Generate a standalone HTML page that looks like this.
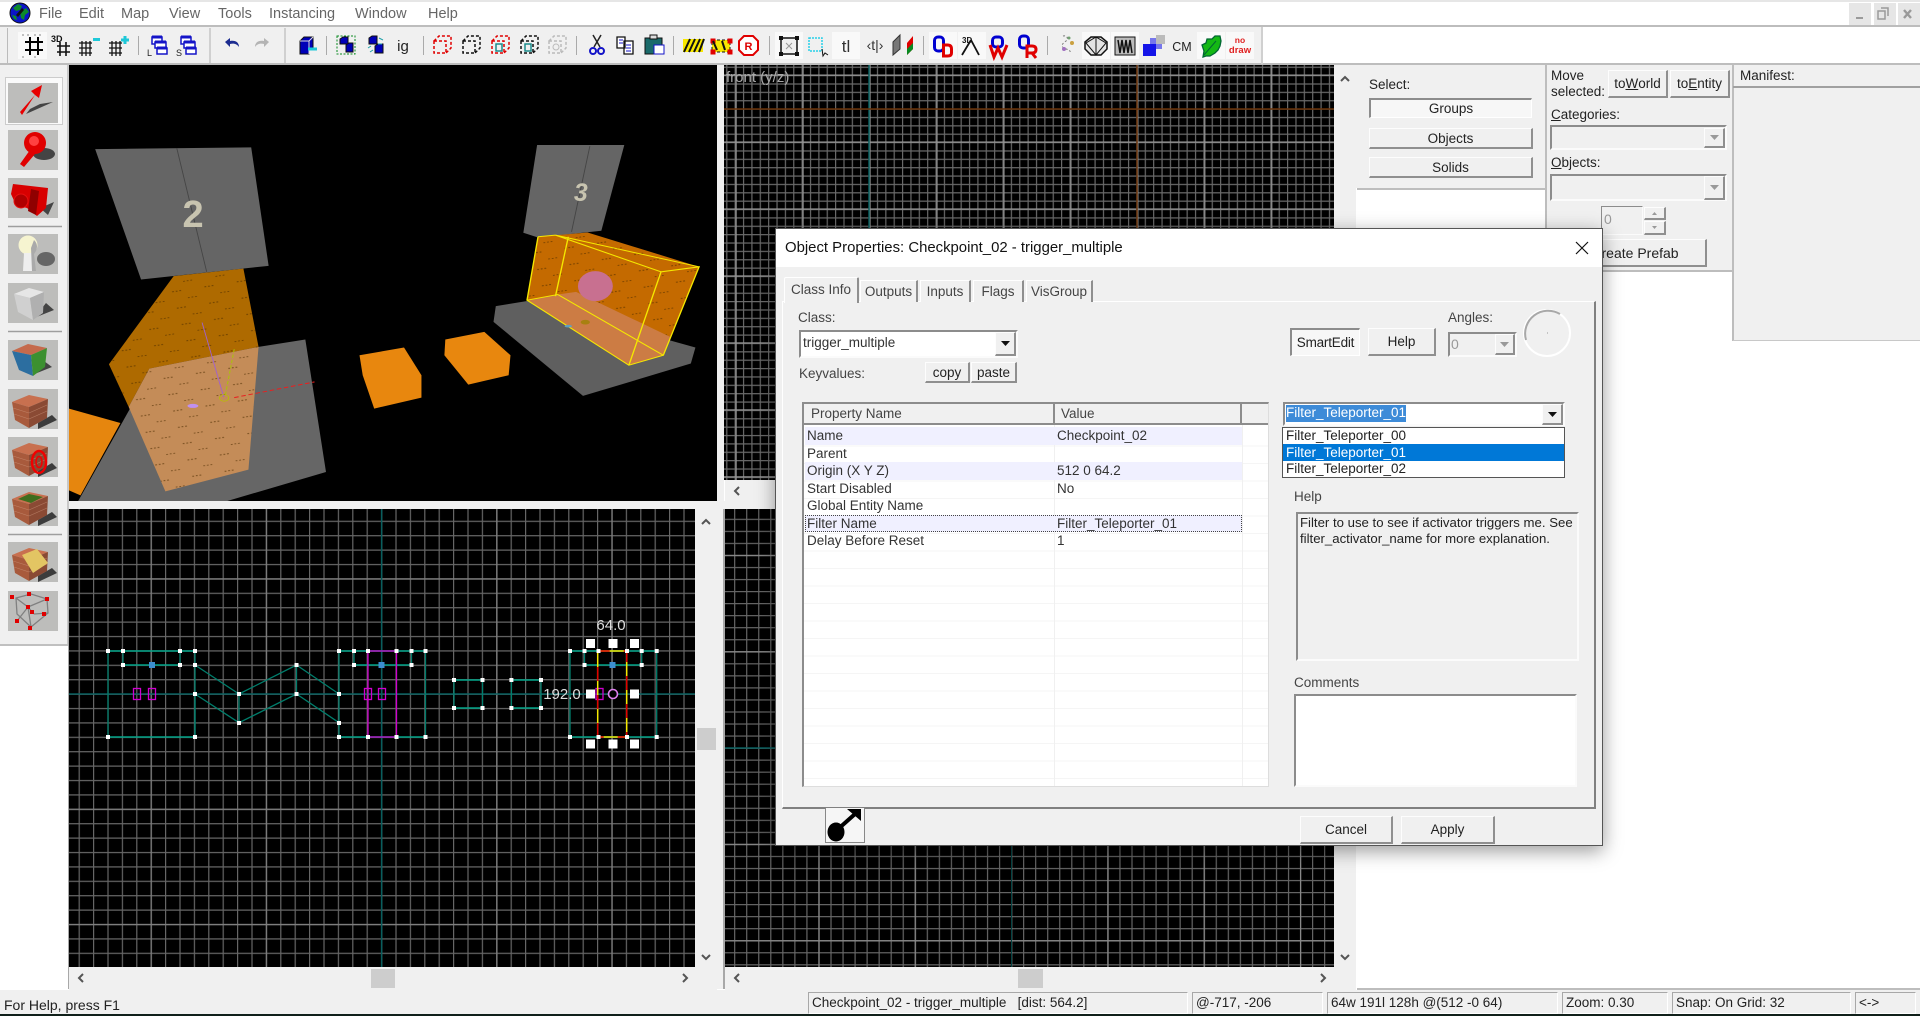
<!DOCTYPE html>
<html><head><meta charset="utf-8"><title>Hammer</title>
<style>
html,body{margin:0;padding:0}
body{width:1920px;height:1016px;overflow:hidden;position:relative;background:#fff;font:13px "Liberation Sans",sans-serif;color:#222;filter:blur(.35px)}
.a,.t,.b,.s{position:absolute;box-sizing:border-box}
.t{white-space:nowrap;line-height:16px;height:16px}
.b{background:#f0f0f0;border:1px solid #fdfdfd;border-right:2px solid #8f8f8f;border-bottom:2px solid #8f8f8f;display:flex;align-items:center;justify-content:center;white-space:nowrap}
.s{border:2px solid #8c8c8c;border-right-color:#fbfbfb;border-bottom-color:#fbfbfb}
.p{background:#f7f7f7;border:2px solid #8c8c8c;border-right-color:#fff;border-bottom-color:#fff;display:flex;align-items:center;justify-content:center}
.g{background:#f0f0f0}
svg{position:absolute;display:block}
.st{position:absolute;top:992px;height:22px;box-sizing:border-box;border:1px solid #a8a8a8;border-right-color:#fff;border-bottom-color:#fff;padding-left:3px;line-height:20px;white-space:nowrap;font-size:13.5px}
.tab{position:absolute;top:280px;height:22px;background:#f0f0f0;border-top:1px solid #fff;border-left:1px solid #fff;border-right:2px solid #8f8f8f;line-height:21px;text-align:center;box-sizing:border-box;font-size:13.5px;color:#444}
.r{position:absolute;left:805px;width:437px;height:17.5px;line-height:17.5px;font-size:13.5px;white-space:nowrap;color:#333}
.r span{position:absolute;top:0}
.r span:first-child{left:2px}
.r span+span{left:252px}
</style></head>
<body>
<!-- title + menu -->
<div class="a" style="left:0;top:0;width:1920px;height:2px;background:#e6e6e6"></div>
<div class="a" style="left:0;top:25px;width:1920px;height:2px;background:#bdbdbd"></div>
<svg style="left:8px;top:2px" width="24" height="22" viewBox="0 0 24 22"><circle cx="12" cy="11" r="10" fill="#0a14c8" stroke="#111"/><path d="M5 6l5-4 4 2-2 4-4 1zM12 10l6-4 3 4-4 3-1 5-3-2zM4 13l4 1 1 4-3-1z" fill="#0c8a2a"/><path d="M8 13l6-7 2 2-6 7z" fill="#111"/></svg>
<div class="t" style="left:39px;top:6px;font-size:14.5px;color:#666">File</div>
<div class="t" style="left:79px;top:6px;font-size:14.5px;color:#666">Edit</div>
<div class="t" style="left:121px;top:6px;font-size:14.5px;color:#666">Map</div>
<div class="t" style="left:169px;top:6px;font-size:14.5px;color:#666">View</div>
<div class="t" style="left:218px;top:6px;font-size:14.5px;color:#666">Tools</div>
<div class="t" style="left:269px;top:6px;font-size:14.5px;color:#666">Instancing</div>
<div class="t" style="left:355px;top:6px;font-size:14.5px;color:#666">Window</div>
<div class="t" style="left:428px;top:6px;font-size:14.5px;color:#666">Help</div>
<div class="a" style="left:1849px;top:3px;width:22px;height:22px;background:#e6e6e6"></div>
<div class="a" style="left:1874px;top:3px;width:22px;height:22px;background:#e6e6e6"></div>
<div class="a" style="left:1898px;top:3px;width:22px;height:22px;background:#e6e6e6"></div>
<svg style="left:1849px;top:3px" width="71" height="22" viewBox="0 0 71 22"><path d="M7 15h7" stroke="#9a9a9a" stroke-width="2"/><path d="M29 8h7v8h-7zM32 5h7v8" fill="none" stroke="#9a9a9a" stroke-width="1.5"/><path d="M55 7l7 8M62 7l-7 8" stroke="#9a9a9a" stroke-width="2.4"/></svg>

<!-- toolbar -->
<div class="a g" style="left:0;top:27px;width:1262px;height:37px"></div>
<div class="a" style="left:0;top:63px;width:1920px;height:2px;background:#bdbdbd"></div>
<div class="a" style="left:1261px;top:27px;width:2px;height:37px;background:#d0d0d0"></div>
<div class="a" style="left:7px;top:28px;width:1px;height:35px;background:#bbb"></div>
<div class="a" style="left:209px;top:28px;width:2px;height:35px;background:#d0d0d0"></div>
<div class="a" style="left:284px;top:28px;width:2px;height:35px;background:#d0d0d0"></div>
<div class="a" style="left:18px;top:32px;width:29px;height:27px;background:#f9f9f9"></div>
<div class="a" style="left:775px;top:32px;width:28px;height:27px;background:#f9f9f9"></div>
<div class="a" style="left:832px;top:32px;width:28px;height:27px;background:#f9f9f9"></div>
<div class="a" style="left:929px;top:32px;width:28px;height:27px;background:#f9f9f9"></div>
<div class="a" style="left:958px;top:32px;width:28px;height:27px;background:#f9f9f9"></div>
<div class="a" style="left:1082px;top:32px;width:28px;height:27px;background:#f9f9f9"></div>
<div class="a" style="left:1111px;top:32px;width:28px;height:27px;background:#f9f9f9"></div>
<div class="a" style="left:1197px;top:32px;width:28px;height:27px;background:#f9f9f9"></div>
<div class="a" style="left:1226px;top:32px;width:28px;height:27px;background:#f9f9f9"></div>
<svg style="left:0;top:27px" width="1262" height="37" viewBox="0 27 1262 37" font-family="Liberation Sans,sans-serif">
<path d="M138.5 36v19M326.5 36v19M423.5 36v19M576.5 36v19M673.5 36v19M769.5 36v19M923.5 36v19M1047.5 36v19" stroke="#aaa"/>
<!-- grids -->
<g transform="translate(34,46)"><path d="M-9-4H9M-9 4H9M-4-9V9M4-9V9" stroke="#000" stroke-width="2"/><path d="M-12-11h2M-7-11h2M0-11h2M5-11h2M-12 11h2M0 11h2" stroke="#888"/></g>
<text x="51" y="42" font-size="9" font-weight="bold" fill="#111">3D</text>
<g transform="translate(63,49)"><path d="M-6-3H7M-6 3H7M-3-7V7M3-7V7" stroke="#111" stroke-width="1.6"/></g>
<g transform="translate(85,48)"><path d="M-6-5H7M-6 0H7M-6 5H7M-3-7V8M1-7V8M5-7V8" stroke="#111" stroke-width="1.3"/></g><path d="M93 39.5h7" stroke="#1ec8d8" stroke-width="3"/>
<g transform="translate(115,48)"><path d="M-6-5H7M-6 0H7M-6 5H7M-3-7V8M1-7V8M5-7V8" stroke="#111" stroke-width="1.3"/></g><path d="M121 40h8M125 36v8" stroke="#1ec8d8" stroke-width="3"/>
<!-- stacks -->
<g fill="#fff" stroke="#1414c8" stroke-width="1.5"><rect x="152" y="37" width="10" height="7"/><rect x="155" y="42" width="11" height="6"/><rect x="157" y="48" width="10" height="6"/><rect x="181" y="37" width="10" height="7"/><rect x="184" y="42" width="11" height="6"/><rect x="186" y="48" width="10" height="6"/></g>
<path d="M152 37h10M155 42h11M157 48h10M181 37h10M184 42h11M186 48h10" stroke="#1414c8" stroke-width="3"/>
<text x="147" y="56" font-size="9" fill="#222">L</text><text x="176" y="56" font-size="9" fill="#222">S</text>
<!-- undo redo -->
<path d="M225 42l5-4v3c5-1 9 1 9 6-2-3-5-4-9-3v3z" fill="#1c2c90"/><path d="M269 42l-5-4v3c-5-1-9 1-9 6 2-3 5-4 9-3v3z" fill="#b4b4b4"/>
<!-- cubes -->
<g transform="translate(307,45)"><path d="M-7-4l4-4H6V5H2V9H-7Z" fill="#0000b8" stroke="#111"/><path d="M-7-4H2V9M2-4l4-4" stroke="#ddd" fill="none"/><path d="M1 4H10" stroke="#1ec8d8" stroke-width="3"/></g>
<rect x="337" y="36" width="18" height="18" fill="none" stroke="#0a8a20" stroke-dasharray="2 1.5"/>
<g fill="#0000b8" stroke="#111"><path d="M340 39l3-2h5v7h-8z"/><path d="M346 45l3-2h4v9h-7z"/><path d="M369 38l3-2h5v8h-8z"/><path d="M375 46l3-2h5v9h-8z"/></g>
<path d="M379 38l4 2M382 44h-4M368 48l3-2M370 52l3-2" stroke="#1ea0a8"/>
<text x="403" y="51" font-size="15" text-anchor="middle" fill="#222">ig</text>
<g fill="none" stroke-dasharray="3 2" stroke-width="1.5"><path stroke="#e00000" d="M434 41h12v12h-12zM434 41l5-5h12v12l-5 5"/><path stroke="#111" d="M463 41h12v12h-12zM463 41l5-5h12v12l-5 5"/><path stroke="#e00000" d="M492 41h12v12h-12zM492 41l5-5h12v12l-5 5"/><path stroke="#111" d="M521 41h12v12h-12zM521 41l5-5h12v12l-5 5"/><path stroke="#bbb" d="M549 41h12v12h-12zM549 41l5-5h12v12l-5 5"/></g>
<rect x="496" y="44" width="6" height="7" fill="none" stroke="#1a8c8c" stroke-width="1.5"/><rect x="525" y="44" width="6" height="7" fill="none" stroke="#1a8c8c" stroke-width="1.5"/><circle cx="556" cy="47" r="3" fill="none" stroke="#bbb"/>
<!-- scissors copy paste -->
<path d="M593 35l7 12M601 35l-7 12" stroke="#222" stroke-width="1.5"/><circle cx="593" cy="51" r="3" fill="none" stroke="#1414c8" stroke-width="2"/><circle cx="601" cy="51" r="3" fill="none" stroke="#1414c8" stroke-width="2"/>
<path d="M617 37h8v11h-8zM624 41h9v13h-9z" fill="#fff" stroke="#111" stroke-width="1.3"/><path d="M619 40h4M619 43h4M626 45h5M626 48h5M626 51h5" stroke="#1414c8"/>
<path d="M645 38h17v16h-17z" fill="#1a6a6a" stroke="#111"/><rect x="650" y="35" width="7" height="4" fill="#ddd" stroke="#111"/><rect x="654" y="45" width="10" height="9" fill="#fff" stroke="#1414c8"/>
<!-- hazard -->
<rect x="683" y="39" width="20" height="13" fill="#f8e800"/><path d="M684 52l6-13M689 52l6-13M694 52l6-13M699 52l5-13" stroke="#111" stroke-width="2"/>
<rect x="712" y="40" width="18" height="12" fill="#f8e800" stroke="#111" stroke-dasharray="3 2"/><path d="M711 39h4v4h-4zM728 39h4v4h-4zM711 50h4v4h-4zM728 50h4v4h-4z" fill="#e00000" stroke="#e00000"/><path d="M713 41l4 9M722 41l3 9" stroke="#111" stroke-width="2"/>
<path d="M744 36h9l5 5v9l-5 5h-9l-5-5v-9z" fill="#fff" stroke="#e00000" stroke-width="2"/><text x="748.5" y="50" font-size="11" text-anchor="middle" font-weight="bold" fill="#d00">R</text>
<!-- handles -->
<rect x="781" y="38" width="16" height="16" fill="#f0f0f0" stroke="#111" stroke-width="1.5"/><path d="M779 36h4v4h-4zM795 36h4v4h-4zM779 52h4v4h-4zM795 52h4v4h-4z" fill="#111"/><path d="M786 43l6 6M792 43l-6 6" stroke="#999"/>
<rect x="809" y="38" width="13" height="13" fill="none" stroke="#28d0e8" stroke-width="1.5" stroke-dasharray="2 1"/><path d="M822 49l1 7 2-3 3 2" fill="none" stroke="#111"/>
<text x="846" y="52" font-size="17" text-anchor="middle" fill="#333">tl</text>
<text x="875" y="50" font-size="14" text-anchor="middle" fill="#333">‹t|›</text>
<path d="M893 42l7-7v14l-7 6z" fill="#777" stroke="#333"/><path d="M907 43l6-7v13l-6 6z" fill="#e00000"/><path d="M907 49l6-6v6l-6 6z" fill="#088a20"/>
<!-- OD OW OR -->
<g fill="none" stroke-width="3">
<rect x="934.5" y="37" width="9" height="14" rx="3.5" stroke="#0000d0"/><path d="M943.5 45h4q4 0 4 4v4q0 3-4 3h-4z" stroke="#e00000"/>
<rect x="992.5" y="37" width="10" height="10" rx="3.5" stroke="#0000d0"/><path d="M990 45l4 12 4-9 4 9 5-12" stroke="#e00000"/>
<rect x="1019.5" y="36" width="9" height="12" rx="3.5" stroke="#0000d0"/><path d="M1027 58V46h5q4 0 4 3.5t-4 3.500h-5M1032 53l4 5" stroke="#e00000"/>
</g>
<text x="962" y="43" font-size="8" font-weight="bold" fill="#111">3D</text><path d="M971 40l-9 15M971 40l8 15" stroke="#111" stroke-width="1.8" fill="none"/>
<!-- right icons -->
<path d="M1063 36c4-1 6 3 3 5s-6 5-2 7 7 2 6 5" fill="none" stroke="#777" stroke-dasharray="2 2"/><circle cx="1072" cy="43" r="2" fill="#caa040"/><circle cx="1064" cy="49" r="2" fill="#a070c0"/><circle cx="1069" cy="38" r="1.5" fill="#70a070"/>
<path d="M1091 37h10l6 5v7l-6 6h-10l-6-6v-7z" fill="#e4e4e4" stroke="#111" stroke-width="1.5"/><path d="M1086 43l10 12 10-12-10-6zM1096 37v18" fill="none" stroke="#111"/>
<rect x="1115" y="37" width="20" height="18" fill="#bbb" stroke="#111"/><path d="M1118 40l2 13 2-13 2 13 2-13 2 13 2-13 2 13" fill="none" stroke="#111" stroke-width="1.5"/>
<rect x="1143" y="44" width="13" height="12" fill="#1414e8"/><rect x="1150" y="38" width="12" height="11" fill="#1414e8" opacity=".55"/><rect x="1156" y="35" width="9" height="9" fill="#bbb"/>
<text x="1182" y="51" font-size="12.5" text-anchor="middle" fill="#222">CM</text>
<path d="M1203 57l1-6-2-6 4-2 1-4 5 0 3-3 5 0 1 5-1 5-2 4-3 3-5 3-4 0z" fill="#14b814" stroke="#063" stroke-width="1.3"/><path d="M1204 55l12-14" stroke="#063"/>
<text x="1240" y="43" font-size="8.5" text-anchor="middle" font-weight="bold" fill="#e02020">no</text><text x="1240" y="53" font-size="9.5" text-anchor="middle" font-weight="bold" fill="#e02020">draw</text>
</svg>

<!-- left tool palette -->
<div class="a g" style="left:0;top:65px;width:68px;height:579px"></div>
<div class="a" style="left:67px;top:65px;width:2px;height:581px;background:#c8c8c8"></div>
<div class="a" style="left:0;top:644px;width:69px;height:2px;background:#c0c0c0"></div>
<div class="a" style="left:5px;top:77px;width:58px;height:48px;background:#fafafa;border:1px solid #ccc;box-sizing:border-box"></div>
<svg style="left:0;top:70px" width="68" height="570" viewBox="0 70 68 570">
<defs>
<g id="bk"><path d="M30 31l14-8 5 5-19 9z" fill="#3c3c3c"/><path d="M4 10l17-7 19 4-19 8z" fill="#c8704f"/><path d="M4 10l17 5v21L7 28z" fill="#a85a3c"/><path d="M21 15l19-8-1 19-18 10z" fill="#8a4a34"/><path d="M5 16l16 5M6 22l15 5M21 21l18-8M21 27l18-8" stroke="#d09a80" stroke-width=".6" opacity=".6"/></g>
</defs>
<g fill="#bdbdbb"><rect x="8" y="83" width="50" height="40"/><rect x="8" y="130" width="50" height="40"/><rect x="8" y="178" width="50" height="40"/><rect x="8" y="234" width="50" height="40"/><rect x="8" y="283" width="50" height="40"/><rect x="8" y="340" width="50" height="40"/><rect x="8" y="389" width="50" height="40"/><rect x="8" y="437" width="50" height="40"/><rect x="8" y="486" width="50" height="40"/><rect x="8" y="542" width="50" height="40"/><rect x="8" y="591" width="50" height="40"/></g>
<path d="M8 226.5h54M8 331.5h54M8 534.5h54" stroke="#9e9e9e" stroke-width="1.5"/>
<!-- arrow -->
<path d="M26 114l27-12-13 2-10 5z" fill="#444"/><path d="M20 112l15-17-4-4 11-6-3 13-4-3-13 20z" fill="#e80000"/>
<!-- magnifier -->
<ellipse cx="44" cy="154" rx="11" ry="6" fill="#444"/><path d="M20 164l10-14 5 4-11 13z" fill="#e00000"/><circle cx="35" cy="143" r="11" fill="#e00000"/><circle cx="34" cy="141" r="5" fill="#ff4040"/>
<!-- blob -->
<path d="M40 208l14-6-6 13z" fill="#444"/><path d="M13 184l35 4-2 20-9 8-10-8-11-3-5-11z" fill="#d80000"/><path d="M31 189l-3 22 8 4 3-24z" fill="#900000"/><circle cx="21" cy="201" r="7" fill="#b00000" stroke="#e81010"/>
<!-- bulb -->
<ellipse cx="46" cy="259" rx="9" ry="7" fill="#666"/><circle cx="28" cy="245" r="9.500" fill="#f6f4d0"/><path d="M24 253h9l2 18h-12z" fill="#eee"/><path d="M34 240c4 4 4 9 0 14l2 17h-4l-1-23z" fill="#aaa"/>
<!-- gray cube -->
<path d="M34 318l20-8-8-7z" fill="#444"/><path d="M14 294l15-6 15 4-14 6z" fill="#e6e6e6"/><path d="M14 294l16 4 3 22-15-8z" fill="#d0d0d0"/><path d="M30 298l14-6-1 21-10 7z" fill="#b0b0b0"/>
<!-- blue green brick -->
<path d="M32 375l20-8-8-6z" fill="#444"/><path d="M12 351l16-7 19 4-16 7z" fill="#c56a4c"/><path d="M12 351l19 4 2 21-14-6z" fill="#2c6ea0"/><path d="M31 355l16-7-2 19-12 9z" fill="#3c9030"/>
<g transform="translate(8,392)"><use href="#bk"/></g>
<g transform="translate(8,440)"><use href="#bk"/><ellipse cx="31" cy="22" rx="7" ry="11" fill="none" stroke="#f00000" stroke-width="2.4"/><ellipse cx="31" cy="22" rx="3" ry="5.500" fill="none" stroke="#f00000" stroke-width="1.6"/></g>
<g transform="translate(8,489)"><use href="#bk"/><path d="M10 10l11-5 14 3-12 6z" fill="#3f6d1e"/></g>
<g transform="translate(8,545)"><use href="#bk"/><path d="M14 10l15-6 11 14-15 10z" fill="#e3c563"/></g>
<!-- vertex -->
<g stroke="#808080" stroke-width="1.3" fill="none"><path d="M16 598l15-4 16 5 1 14-17 14-14-13zM16 598l12 9 19-8M28 607l3 20M28 607l-11 14M28 607l6 7M34 614l14-1"/></g>
<g fill="#e00000"><rect x="27" y="592" width="4" height="4"/><rect x="45" y="597" width="4" height="4"/><rect x="10" y="595" width="4" height="4"/><rect x="26" y="605" width="4" height="4"/><rect x="30" y="610" width="4" height="4"/><rect x="15" y="619" width="4" height="4"/><rect x="42" y="612" width="4" height="4"/><rect x="28" y="626" width="4" height="4"/></g>
</svg>

<!-- general backgrounds -->
<div class="a g" style="left:69px;top:501px;width:1287px;height:8px"></div>
<div class="a g" style="left:717px;top:65px;width:7px;height:924px"></div>
<div class="a g" style="left:1334px;top:65px;width:22px;height:924px"></div>
<div class="a" style="left:723px;top:509px;width:2px;height:480px;background:#a8a8a8"></div>
<div class="a" style="left:68px;top:509px;width:1px;height:480px;background:#a8a8a8"></div>
<div class="a g" style="left:69px;top:967px;width:648px;height:23px"></div>
<div class="a g" style="left:725px;top:967px;width:631px;height:23px"></div>
<div class="a g" style="left:695px;top:509px;width:22px;height:460px"></div>
<div class="a g" style="left:725px;top:480px;width:609px;height:22px"></div>

<!-- 3D view -->
<svg style="left:69px;top:65px;background:#000" width="648" height="436" viewBox="150 15 1412 1307" preserveAspectRatio="none">
<defs><pattern id="sp" width="72" height="50" patternUnits="userSpaceOnUse" patternTransform="rotate(-12)"><path d="M6 8h24M36 32h24" stroke="#4a2a00" stroke-width="2.5" stroke-dasharray="4 4" opacity=".75"/></pattern></defs>
<path d="M170 1322L285 1040 325 925 563 860 665 838 710 1235 495 1322Z" fill="#666"/>
<path d="M150 1045L262 1088 175 1305 150 1290Z" fill="#e6860e"/>
<path d="M378 648L530 625 563 860 325 925 280 1040 237 912Z" fill="#ae6a00"/>
<path d="M378 648L530 625 563 860 325 925 280 1040 237 912Z" fill="url(#sp)"/>
<path d="M325 925L563 860 541 1228 360 1293 280 1040Z" fill="#c48c58"/>
<path d="M325 925L563 860 541 1228 360 1293 280 1040Z" fill="url(#sp)"/>
<path d="M207 267L547 262 585 617 307 658Z" fill="#656565"/><path d="M385 265L450 635" stroke="#454545" stroke-width="2"/>
<path d="M1170 255L1360 255 1310 512 1172 532 1140 518Z" fill="#656565"/><path d="M1285 258L1245 515" stroke="#454545" stroke-width="2"/>
<path d="M783 885L880 862 918 945 918 1012 815 1045 790 945Z" fill="#e8870e"/>
<path d="M970 838L1055 815 1112 885 1108 945 1020 973 968 885Z" fill="#e8870e"/>
<path d="M1080 738L1150 722 1515 862 1505 910 1270 1007 1075 785Z" fill="#5f5f5f"/>
<path d="M1172 530L1280 517 1523 620 1445 885 1370 915 1148 720Z" fill="#c46a00"/>
<path d="M1172 530L1280 517 1523 620 1445 885 1370 915 1148 720Z" fill="url(#sp)"/>
<path d="M1148 720L1215 703 1255 695 1460 830 1445 885 1370 915Z" fill="#cc7c44"/>
<ellipse cx="1297" cy="678" rx="38" ry="45" fill="#c87090"/>
<path d="M1172 530L1148 720 1370 915 1445 885 1523 620 1440 635 1370 915M1210 525L1523 620M1210 525L1440 635M1238 530L1210 708M1148 720L1215 703 1445 885M1172 530L1210 525" fill="none" stroke="#f5e800" stroke-width="3"/>
<path d="M440 787L487 1010" stroke="#a060d0" stroke-width="2"/><path d="M510 867L490 1010" stroke="#a8c800" stroke-width="2" stroke-dasharray="10 6"/><path d="M510 1012L685 965" stroke="#e82020" stroke-width="3" stroke-dasharray="10 6"/>
<circle cx="488" cy="1013" r="10" fill="none" stroke="#b8c000" stroke-width="2"/><ellipse cx="420" cy="1037" rx="12" ry="6" fill="#c090f0"/>
<ellipse cx="1275" cy="786" rx="10" ry="7" fill="#a88010"/><ellipse cx="1238" cy="798" rx="8" ry="4" fill="#60a0c0"/>
<g transform="scale(2.178,3)" font-family="Liberation Sans,sans-serif" text-anchor="middle" fill="#c8c4b0" font-weight="bold"><text x="193" y="167" font-size="38">2</text><text x="581" y="141" font-size="25" font-style="italic">3</text></g>
</svg>

<!-- front view -->
<svg style="left:724px;top:65px;background:#000" width="610" height="415" viewBox="724 65 610 415">
<defs><pattern id="gf" width="8.37" height="8.37" x="868.5" y="108.5" patternUnits="userSpaceOnUse"><path d="M.6 0V8.37M0 .6H8.37" stroke="#6a6a6a" stroke-width="1.2"/></pattern>
<pattern id="gfm" width="66.96" height="66.96" x="735.5" y="74.5" patternUnits="userSpaceOnUse"><path d="M.6 0V66.96M0 .6H66.96" stroke="#969696" stroke-width="1.2"/></pattern></defs>
<rect x="724" y="65" width="610" height="415" fill="url(#gf)"/><rect x="724" y="65" width="610" height="415" fill="url(#gfm)"/>
<path d="M869 65V480" stroke="#065e5e" stroke-width="1.5"/><path d="M724 109H1334M1137 65V480" stroke="#6a3208" stroke-width="1.5"/>
<text x="726" y="82" font-size="15" fill="#a8a8a8" font-family="Liberation Sans,sans-serif">front (y/z)</text>
</svg>

<!-- top view -->
<svg style="left:69px;top:509px;background:#000" width="626" height="458" viewBox="69 509 626 458" font-family="Liberation Sans,sans-serif">
<defs><pattern id="gt" width="14.4" height="14.4" x="381" y="693.5" patternUnits="userSpaceOnUse"><path d="M.6 0V14.4M0 .6H14.4" stroke="#666" stroke-width="1.2"/></pattern>
<pattern id="gtm" width="115.2" height="115.2" x="381" y="693.5" patternUnits="userSpaceOnUse"><path d="M.6 0V115.2M0 .6H115.2" stroke="#808080" stroke-width="1.2"/></pattern></defs>
<rect x="69" y="509" width="626" height="458" fill="url(#gt)"/><rect x="69" y="509" width="626" height="458" fill="url(#gtm)"/>
<path d="M381.6 509V967M69 694H695" stroke="#075e5e" stroke-width="1.5"/>
<g fill="none" stroke="#007e6c" stroke-width="1.3">
<path d="M108 651V737M195 651V737M123 651V665M180 651V665"/>
<path d="M195 665L239 694 296.5 665 339 694M195 694L239 722.7 296.5 694 339 722.7M239 694V722.7M296.5 665V694M195 694V737"/>
<path d="M339 651V737M425.5 651V737M354 651V665M411.5 651V665"/>
<path d="M454 680V708M482.5 680V708M511.4 680V708M541 680V708"/>
<path d="M570 651V737M656.7 651V737M584.5 651V665M641.7 651V665"/>
</g>
<g stroke="#00a488" stroke-width="1.5"><path d="M108 651H195M123 665H180M108 737H195M339 651H425.5M354 665H411.5M339 737H425.5M454 680H482.5M454 708H482.5M511.4 680H541M511.4 708H541M570 651H656.7M584.5 665H641.7M570 737H656.7"/></g>
<g fill="none" stroke="#d000d0" stroke-width="1.3"><rect x="133.5" y="688.5" width="7" height="11"/><rect x="148.5" y="688.5" width="7" height="11"/><rect x="364.5" y="688.5" width="7" height="11"/><rect x="378.5" y="688.5" width="7" height="11"/><path d="M368 651H396.5V737H368Z"/><rect x="596" y="688.5" width="7" height="11"/></g>
<g fill="#3d8fd0"><rect x="149" y="662" width="6" height="6"/><rect x="378.5" y="662" width="6" height="6"/><rect x="609.5" y="662" width="6" height="6"/></g>
<path d="M597.7 651H626.7V737H597.7Z" fill="none" stroke="#f5e800" stroke-width="1.5"/>
<path d="M597.7 737V651H626.7V737H597.7" fill="none" stroke="#e00000" stroke-width="1.5" stroke-dasharray="14 14"/>
<g fill="#fff">
<rect x="106" y="649" width="4" height="4"/><rect x="121" y="649" width="4" height="4"/><rect x="178" y="649" width="4" height="4"/><rect x="193" y="649" width="4" height="4"/><rect x="121" y="663" width="4" height="4"/><rect x="178" y="663" width="4" height="4"/><rect x="193" y="663" width="4" height="4"/><rect x="193" y="692" width="4" height="4"/><rect x="106" y="735" width="4" height="4"/><rect x="193" y="735" width="4" height="4"/>
<rect x="237" y="692" width="4" height="4"/><rect x="294.5" y="663" width="4" height="4"/><rect x="294.5" y="692" width="4" height="4"/><rect x="237" y="721" width="4" height="4"/><rect x="337" y="692" width="4" height="4"/><rect x="337" y="721" width="4" height="4"/>
<rect x="337" y="649" width="4" height="4"/><rect x="352" y="649" width="4" height="4"/><rect x="366" y="649" width="4" height="4"/><rect x="394.5" y="649" width="4" height="4"/><rect x="409.5" y="649" width="4" height="4"/><rect x="423.5" y="649" width="4" height="4"/><rect x="352" y="663" width="4" height="4"/><rect x="409.5" y="663" width="4" height="4"/><rect x="337" y="735" width="4" height="4"/><rect x="366" y="735" width="4" height="4"/><rect x="394.5" y="735" width="4" height="4"/><rect x="423.5" y="735" width="4" height="4"/>
<rect x="452" y="678" width="4" height="4"/><rect x="480.5" y="678" width="4" height="4"/><rect x="452" y="706" width="4" height="4"/><rect x="480.5" y="706" width="4" height="4"/><rect x="509.4" y="678" width="4" height="4"/><rect x="539" y="678" width="4" height="4"/><rect x="509.4" y="706" width="4" height="4"/><rect x="539" y="706" width="4" height="4"/>
<rect x="568" y="649" width="4" height="4"/><rect x="582.5" y="649" width="4" height="4"/><rect x="596.5" y="649" width="4" height="4"/><rect x="625" y="649" width="4" height="4"/><rect x="639.7" y="649" width="4" height="4"/><rect x="654.7" y="649" width="4" height="4"/><rect x="582.5" y="663" width="4" height="4"/><rect x="639.7" y="663" width="4" height="4"/><rect x="568" y="735" width="4" height="4"/><rect x="596.5" y="735" width="4" height="4"/><rect x="625" y="735" width="4" height="4"/><rect x="654.7" y="735" width="4" height="4"/>
<rect x="586" y="639" width="9" height="9"/><rect x="608.5" y="639" width="9" height="9"/><rect x="630" y="639" width="9" height="9"/><rect x="586" y="689.5" width="9" height="9"/><rect x="630" y="689.5" width="9" height="9"/><rect x="586" y="739.5" width="9" height="9"/><rect x="608.5" y="739.5" width="9" height="9"/><rect x="630" y="739.5" width="9" height="9"/>
</g>
<circle cx="613" cy="694" r="4.5" fill="#000" stroke="#e080f0" stroke-width="1.6"/>
<text x="611" y="630" font-size="15" text-anchor="middle" fill="#ddd">64.0</text>
<text x="562" y="699" font-size="15" text-anchor="middle" fill="#ddd">192.0</text>
</svg>

<!-- side view -->
<svg style="left:725px;top:509px;background:#000" width="609" height="458" viewBox="725 509 609 458">
<defs><pattern id="gs" width="12.04" height="12.04" x="1011" y="747.5" patternUnits="userSpaceOnUse"><path d="M.6 0V12.04M0 .6H12.04" stroke="#666" stroke-width="1.2"/></pattern>
<pattern id="gsm" width="96.32" height="96.32" x="1011" y="747.5" patternUnits="userSpaceOnUse"><path d="M.6 0V96.32M0 .6H96.32" stroke="#8a8a8a" stroke-width="1.2"/></pattern></defs>
<rect x="725" y="509" width="609" height="458" fill="url(#gs)"/><rect x="725" y="509" width="609" height="458" fill="url(#gsm)"/>
<path d="M1011.5 509V967" stroke="#044444"/><path d="M725 748H1334" stroke="#075e5e" stroke-width="1.5"/>
</svg>

<!-- scrollbar bits -->
<div class="a" style="left:697px;top:728px;width:19px;height:22px;background:#cdcdcd"></div>
<div class="a" style="left:371px;top:969px;width:24px;height:19px;background:#cdcdcd"></div>
<div class="a" style="left:1018px;top:969px;width:25px;height:19px;background:#cdcdcd"></div>
<svg style="left:0;top:0" width="1920" height="1016" viewBox="0 0 1920 1016"><g fill="none" stroke="#555" stroke-width="2"><path d="M702 524l4-4 4 4M702 955l4 4 4-4M83 974l-4 4 4 4M683 974l4 4-4 4M739 974l-4 4 4 4M1321 974l4 4-4 4M1341 81l4-4 4 4M1341 955l4 4 4-4M739 487l-4 4 4 4"/></g></svg>

<!-- select panel -->
<div class="a g" style="left:1357px;top:65px;width:188px;height:123px"></div>
<div class="a g" style="left:1356px;top:65px;width:1px;height:123px"></div>
<div class="a" style="left:1357px;top:188px;width:188px;height:2px;background:#bdbdbd"></div>
<div class="t" style="left:1369px;top:77px;font-size:13.5px">Select:</div>
<div class="a p" style="left:1369px;top:98px;width:163px;height:20px;font-size:13.5px;border-width:2px 1px 1px 2px">Groups</div>
<div class="b" style="left:1369px;top:128px;width:164px;height:21px;font-size:13.5px">Objects</div>
<div class="b" style="left:1369px;top:157px;width:164px;height:21px;font-size:13.5px">Solids</div>

<!-- move panel -->
<div class="a g" style="left:1545px;top:65px;width:188px;height:205px"></div>
<div class="a" style="left:1545px;top:65px;width:2px;height:205px;background:#bdbdbd"></div>
<div class="a" style="left:1545px;top:270px;width:188px;height:2px;background:#bdbdbd"></div>
<div class="t" style="left:1551px;top:68px;font-size:13.5px">Move</div>
<div class="t" style="left:1551px;top:84px;font-size:13.5px">selected:</div>
<div class="b" style="left:1608px;top:70px;width:60px;height:28px;font-size:13.5px">to<u>W</u>orld</div>
<div class="b" style="left:1670px;top:70px;width:60px;height:28px;font-size:13.5px">to<u>E</u>ntity</div>
<div class="t" style="left:1551px;top:107px;font-size:13.5px"><u>C</u>ategories:</div>
<div class="a s" style="left:1550px;top:125px;width:177px;height:25px"></div>
<div class="b" style="left:1704px;top:128px;width:21px;height:20px"><svg style="position:static" width="9" height="5"><path d="M0 0h9L4.5 5z" fill="#999"/></svg></div>
<div class="t" style="left:1551px;top:155px;font-size:13.5px"><u>O</u>bjects:</div>
<div class="a s" style="left:1550px;top:174px;width:177px;height:27px"></div>
<div class="b" style="left:1704px;top:176px;width:21px;height:24px"><svg style="position:static" width="9" height="5"><path d="M0 0h9L4.5 5z" fill="#999"/></svg></div>
<div class="a s" style="left:1601px;top:206px;width:42px;height:29px;border-width:1px"></div>
<div class="t" style="left:1604px;top:211px;font-size:14px;color:#999">0</div>
<div class="b" style="left:1644px;top:207px;width:22px;height:13px"><svg style="position:static" width="5" height="3"><path d="M0 3h5L2.500 0z" fill="#999"/></svg></div>
<div class="b" style="left:1644px;top:221px;width:22px;height:14px"><svg style="position:static" width="5" height="3"><path d="M0 0h5L2.500 3z" fill="#999"/></svg></div>
<div class="b" style="left:1564px;top:239px;width:143px;height:28px;font-size:14px">Create Prefab</div>

<!-- manifest -->
<div class="a g" style="left:1733px;top:65px;width:187px;height:276px"></div>
<div class="a" style="left:1732px;top:65px;width:2px;height:276px;background:#bdbdbd"></div>
<div class="a" style="left:1733px;top:86px;width:187px;height:2px;background:#a0a0a0"></div>
<div class="a" style="left:1733px;top:340px;width:187px;height:1px;background:#c8c8c8"></div>
<div class="t" style="left:1740px;top:68px;font-size:13.5px">Manifest:</div>

<!-- status -->
<div class="a" style="left:1357px;top:988px;width:563px;height:2px;background:#bdbdbd"></div>
<div class="a" style="left:0;top:990px;width:1920px;height:24px;background:#f0f0f0"></div>
<div class="a" style="left:0;top:1014px;width:1920px;height:2px;background:#10201a"></div>
<div class="t" style="left:4px;top:997px;font-size:14px">For Help, press F1</div>
<div class="st" style="left:808px;width:380px">Checkpoint_02 - trigger_multiple&nbsp;&nbsp;&nbsp;[dist: 564.2]</div>
<div class="st" style="left:1192px;width:131px">@-717, -206</div>
<div class="st" style="left:1327px;width:231px">64w 191l 128h @(512 -0 64)</div>
<div class="st" style="left:1562px;width:106px">Zoom: 0.30</div>
<div class="st" style="left:1672px;width:179px">Snap: On Grid: 32</div>
<div class="st" style="left:1855px;width:61px">&lt;-&gt;</div>

<!-- dialog -->
<div class="a g" style="left:775px;top:228px;width:828px;height:618px;border:1px solid #555;box-sizing:border-box;box-shadow:0 5px 18px rgba(0,0,0,.4)"></div>
<div class="a" style="left:776px;top:229px;width:826px;height:38px;background:#fff"></div>
<div class="t" style="left:785px;top:240px;font-size:14.9px;color:#111">Object Properties: Checkpoint_02 - trigger_multiple</div>
<svg style="left:1574px;top:240px" width="16" height="16"><path d="M2 2l12 12M14 2L2 14" stroke="#111" stroke-width="1.2"/></svg>

<!-- tab pane -->
<div class="a" style="left:782px;top:301px;width:814px;height:508px;border:1px solid #fff;border-right:2px solid #808080;border-bottom:2px solid #808080;box-sizing:border-box"></div>
<div class="tab" style="left:784px;top:277px;width:75px;height:26px;line-height:24px;border-radius:2px 2px 0 0;z-index:1">Class Info</div>
<div class="tab" style="left:860px;width:58px">Outputs</div>
<div class="tab" style="left:920px;width:51px">Inputs</div>
<div class="tab" style="left:973px;width:51px">Flags</div>
<div class="tab" style="left:1026px;width:67px">VisGroup</div>

<div class="t" style="left:798px;top:310px;font-size:13.5px;color:#444">Class:</div>
<div class="a s" style="left:799px;top:330px;width:219px;height:28px;background:#fff;line-height:22px;padding-left:2px;font-size:13.5px;color:#333">trigger_multiple</div>
<div class="b" style="left:995px;top:332px;width:21px;height:24px"><svg style="position:static" width="9" height="5"><path d="M0 0h9L4.5 5z" fill="#111"/></svg></div>
<div class="t" style="left:799px;top:366px;font-size:13.5px;color:#444">Keyvalues:</div>
<div class="b" style="left:925px;top:362px;width:45px;height:21px;font-size:13.5px">copy</div>
<div class="b" style="left:971px;top:362px;width:46px;height:21px;font-size:13.5px">paste</div>

<!-- list -->
<div class="a" style="left:802px;top:402px;width:467px;height:385px;background:repeating-linear-gradient(#fff 0 16.5px,#f5f5f5 16.5px 17.5px) 0 25px;border-left:2px solid #8c8c8c;border-top:2px solid #8c8c8c;border-right:1px solid #ddd;border-bottom:1px solid #ddd;box-sizing:border-box"></div>
<div class="a" style="left:1054px;top:424px;width:1px;height:362px;background:#f0f0f0"></div>
<div class="a" style="left:1242px;top:424px;width:1px;height:362px;background:#f0f0f0"></div>
<div class="a g" style="left:804px;top:404px;width:464px;height:21px;border-bottom:2px solid #8c8c8c;box-sizing:border-box"></div>
<div class="a" style="left:1053px;top:404px;width:2px;height:21px;background:#8c8c8c"></div>
<div class="a" style="left:1240px;top:404px;width:2px;height:21px;background:#8c8c8c"></div>
<div class="t" style="left:811px;top:406px;font-size:13.5px;color:#444">Property Name</div>
<div class="t" style="left:1061px;top:406px;font-size:13.5px;color:#444">Value</div>
<div class="r" style="top:427px;background:#f0f0ff"><span>Name</span><span>Checkpoint_02</span></div>
<div class="r" style="top:444.5px"><span>Parent</span></div>
<div class="r" style="top:462px;background:#f0f0ff"><span>Origin (X Y Z)</span><span>512 0 64.2</span></div>
<div class="r" style="top:479.5px"><span>Start Disabled</span><span>No</span></div>
<div class="r" style="top:497px"><span>Global Entity Name</span></div>
<div class="r" style="top:514.5px;background:#f0f0ff;outline:1px dotted #444;outline-offset:-1px"><span>Filter Name</span><span>Filter_Teleporter_01</span></div>
<div class="r" style="top:532px"><span>Delay Before Reset</span><span>1</span></div>

<!-- right of dialog -->
<div class="a p" style="left:1290px;top:328px;width:70px;height:28px;font-size:13.5px;letter-spacing:-.2px;border-width:2px 1px 1px 2px">SmartEdit</div>
<div class="b" style="left:1368px;top:328px;width:68px;height:28px;font-size:13.5px">Help</div>
<div class="t" style="left:1448px;top:310px;font-size:13.5px;color:#444">Angles:</div>
<div class="a s" style="left:1448px;top:332px;width:69px;height:25px;line-height:21px;padding-left:1px;font-size:14px;color:#999">0</div>
<div class="b" style="left:1495px;top:334px;width:20px;height:21px"><svg style="position:static" width="9" height="5"><path d="M0 0h9L4.5 5z" fill="#999"/></svg></div>
<svg style="left:1521px;top:307px" width="52" height="52"><circle cx="26" cy="26" r="23" fill="none" stroke="#fff" stroke-width="2"/><path d="M5 33A23 23 0 0 1 39 7" fill="none" stroke="#a8a8a8" stroke-width="2"/><path d="M26 26h1" stroke="#999"/></svg>

<div class="a s" style="left:1283px;top:402px;width:282px;height:24px;background:#fff"></div>
<div class="t" style="left:1286px;top:405px;font-size:13.5px;background:#3d8bd8;color:#fff;height:17px">Filter_Teleporter_01</div>
<div class="b" style="left:1542px;top:404px;width:21px;height:21px"><svg style="position:static" width="9" height="5"><path d="M0 0h9L4.5 5z" fill="#111"/></svg></div>
<div class="a" style="left:1282px;top:427px;width:283px;height:51px;background:#fff;border:1px solid #555;box-sizing:border-box"></div>
<div class="a" style="left:1283px;top:444px;width:281px;height:17px;background:#0078d7"></div>
<div class="t" style="left:1286px;top:428px;font-size:13.5px">Filter_Teleporter_00</div>
<div class="t" style="left:1286px;top:445px;font-size:13.5px;color:#fff">Filter_Teleporter_01</div>
<div class="t" style="left:1286px;top:461px;font-size:13.5px">Filter_Teleporter_02</div>

<div class="t" style="left:1294px;top:489px;font-size:13.5px;color:#444">Help</div>
<div class="a s" style="left:1296px;top:512px;width:283px;height:149px"></div>
<div class="t" style="left:1300px;top:515px;font-size:13.2px">Filter to use to see if activator triggers me. See</div>
<div class="t" style="left:1300px;top:531px;font-size:13.2px">filter_activator_name for more explanation.</div>
<div class="t" style="left:1294px;top:675px;font-size:13.5px;color:#444">Comments</div>
<div class="a s" style="left:1294px;top:694px;width:283px;height:93px;background:#fff"></div>

<div class="a" style="left:825px;top:808px;width:40px;height:35px;border:1px solid #888;border-top:0;background:#f6f6f6;box-sizing:border-box"></div>
<svg style="left:825px;top:808px" width="40" height="35"><ellipse cx="11" cy="24" rx="8.5" ry="9.5" fill="#000"/><path d="M12 22L30 6" stroke="#000" stroke-width="4"/><path d="M22 1h14v12z" fill="#000"/></svg>
<div class="b" style="left:1300px;top:816px;width:93px;height:28px;font-size:13.5px">Cancel</div>
<div class="b" style="left:1401px;top:816px;width:94px;height:28px;font-size:13.5px">Apply</div>
</body></html>
